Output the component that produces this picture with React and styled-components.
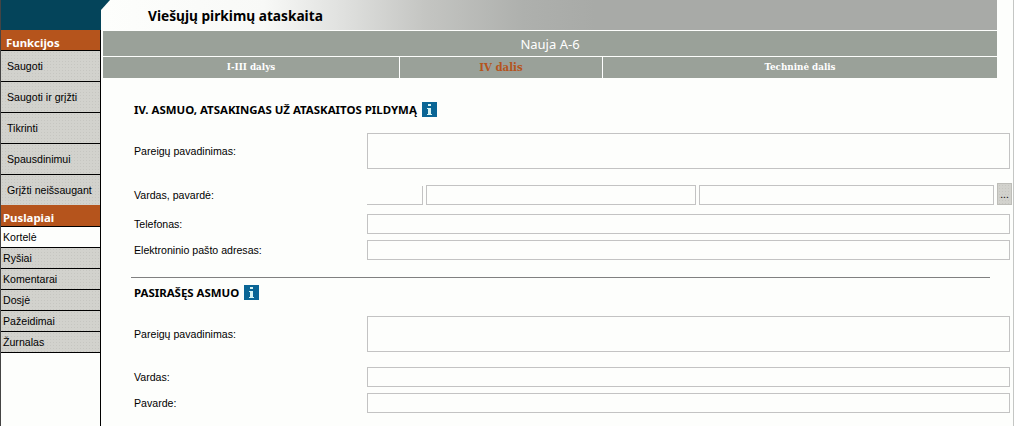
import React from 'react';
import styled, { createGlobalStyle } from 'styled-components';

const GlobalStyle = createGlobalStyle`
  html, body {
    margin: 0;
    padding: 0;
    height: 426px;
    overflow: hidden;
    background: #fdfefc;
  }
`;

const Page = styled.div`
  display: flex;
  width: 1014px;
  height: 426px;
  box-sizing: border-box;
  border-right: 1px solid #c4c6c4;
  font-family: 'Liberation Sans', Arial, sans-serif;
  font-size: 10.6px;
  color: #000;
  overflow: hidden;
`;

const Sidebar = styled.aside`
  flex: none;
  width: 101px;
  height: 426px;
  box-sizing: border-box;
  border-left: 1px solid #444;
  border-right: 1px solid #000;
  background: #fdfefc;
`;

const Corner = styled.div`
  position: relative;
  height: 30px;
  margin-right: -1px;
  background: #04445a;

  &::after {
    content: '';
    position: absolute;
    top: 0;
    left: 100%;
    border-top: 10px solid #04445a;
    border-right: 9px solid transparent;
  }
`;

const GroupTitle = styled.div`
  height: ${p => p.$height}px;
  padding: 5px 0 0 ${p => p.$indent}px;
  box-sizing: border-box;
  background: #b5541c;
  color: #fff;
  font-family: 'Noto Sans', sans-serif;
  font-weight: 700;
  font-size: 11.4px;
  line-height: 16px;
`;

const texture = `
  background-color: #d2d2cd;
  background-image: radial-gradient(#c6c6c1 0.7px, transparent 0.8px);
  background-size: 3px 3px;
`;

const ActionItem = styled.div`
  height: 31px;
  box-sizing: border-box;
  border-top: 1px solid #000;
  padding: 7px 0 0 6px;
  line-height: 16px;
  white-space: nowrap;
  ${texture}
`;

const PageItem = styled.div`
  height: 21px;
  box-sizing: border-box;
  border-top: 1px solid #000;
  padding-left: 2px;
  line-height: 20px;
  ${p => (p.$active ? 'background: #fdfefc;' : texture)}

  &:last-child {
    height: 22px;
    border-bottom: 1px solid #000;
  }
`;

const Main = styled.main`
  flex: 1;
  min-width: 0;
  padding-left: 2px;
`;

const Banner = styled.header`
  width: 894px;
  height: 30px;
  box-sizing: border-box;
  padding: 8px 0 0 45px;
  background: linear-gradient(90deg, #fdfefc 0%, #f8f9f7 18%, #dfe0de 27%, #c4c5c2 36%, #aeb0ad 47%, #a8aaa7 55%, #a8aaa7 100%);
  font-family: 'Noto Sans', sans-serif;
  font-weight: 700;
  font-size: 13.7px;
  line-height: 16px;
`;

const RecordTitle = styled.div`
  width: 894px;
  height: 25px;
  margin-top: 1px;
  background: #9aa199;
  color: #fff;
  text-align: center;
  font-family: 'Noto Sans', sans-serif;
  font-size: 13px;
  line-height: 26px;
`;

const Tabs = styled.nav`
  display: grid;
  grid-template-columns: 296px 203px 395px;
  width: 894px;
  height: 20px;
  margin-top: 1px;
`;

const Tab = styled.div`
  background: #9aa199;
  color: ${p => (p.$active ? '#b5541c' : '#fff')};
  font-family: 'DejaVu Serif', serif;
  font-weight: 700;
  font-size: ${p => (p.$active ? 10.2 : 8.8)}px;
  line-height: 21px;
  text-align: center;

  & + & {
    border-left: 1px solid #fff;
  }
`;

const Form = styled.div`
  padding: 25px 3px 0 28px;
`;

const SectionTitle = styled.h2`
  display: flex;
  align-items: center;
  gap: 5px;
  height: 15px;
  margin: 0 0 16px 3px;
  font-family: 'Noto Sans', sans-serif;
  font-size: 11.45px;
  font-weight: 700;
`;

const InfoIcon = styled.svg`
  flex: none;
  width: 15px;
  height: 15px;
`;

const Row = styled.div`
  display: grid;
  grid-template-columns: 233px 643px;
  align-items: end;
  margin: 0 0 ${p => p.$gap}px 3px;
`;

const Label = styled.div`
  height: ${p => (p.$tall ? 36 : 20)}px;
  line-height: ${p => (p.$tall ? 37 : 21)}px;
`;

const Field = styled.div`
  height: ${p => (p.$tall ? 36 : 20)}px;
  box-sizing: border-box;
  border: 1px solid #c3c3c3;
`;

const NameFields = styled.div`
  display: grid;
  grid-template-columns: 56px 270px 295px 15px;
  column-gap: 3px;
  align-items: end;
`;

const Prefix = styled.div`
  height: 19px;
  box-sizing: border-box;
  border-right: 1px solid #c3c3c3;
  border-bottom: 1px solid #c3c3c3;
`;

const LookupButton = styled.div`
  height: 22px;
  box-sizing: border-box;
  border: 1px solid #bdbdb8;
  text-align: center;
  font-size: 10px;
  line-height: 22px;
  ${texture}
`;

const Divider = styled.hr`
  width: 859px;
  height: 1px;
  margin: 17px 0 7px;
  border: 0;
  background: #808080;
`;

const Info = () => (
  <InfoIcon viewBox="0 0 15 15">
    <rect width="15" height="15" fill="#0a6595" />
    <path d="M6 2h3v2H6zM5 6h4v6h1v1H5v-1h1V7H5z" fill="#d8f4f4" />
  </InfoIcon>
);

export default function App() {
  return (
    <Page>
      <GlobalStyle />
      <Sidebar>
        <Corner />
        <GroupTitle $indent={5} $height={20}>Funkcijos</GroupTitle>
        {['Saugoti', 'Saugoti ir grįžti', 'Tikrinti', 'Spausdinimui', 'Grįžti neišsaugant'].map(a => (
          <ActionItem key={a}>{a}</ActionItem>
        ))}
        <GroupTitle $indent={2} $height={21}>Puslapiai</GroupTitle>
        {['Kortelė', 'Ryšiai', 'Komentarai', 'Dosjė', 'Pažeidimai', 'Žurnalas'].map((a, i) => (
          <PageItem key={a} $active={i === 0}>{a}</PageItem>
        ))}
      </Sidebar>
      <Main>
        <Banner>Viešųjų pirkimų ataskaita</Banner>
        <RecordTitle>Nauja A-6</RecordTitle>
        <Tabs>
          <Tab>I-III dalys</Tab>
          <Tab $active>IV dalis</Tab>
          <Tab>Techninė dalis</Tab>
        </Tabs>
        <Form>
          <SectionTitle>IV. ASMUO, ATSAKINGAS UŽ ATASKAITOS PILDYMĄ <Info /></SectionTitle>
          <Row $gap={14}>
            <Label $tall>Pareigų pavadinimas:</Label>
            <Field $tall />
          </Row>
          <Row $gap={9}>
            <Label>Vardas, pavardė:</Label>
            <NameFields>
              <Prefix />
              <Field />
              <Field />
              <LookupButton>...</LookupButton>
            </NameFields>
          </Row>
          <Row $gap={6}>
            <Label>Telefonas:</Label>
            <Field />
          </Row>
          <Row $gap={0}>
            <Label>Elektroninio pašto adresas:</Label>
            <Field />
          </Row>
          <Divider />
          <SectionTitle>PASIRAŠĘS ASMUO <Info /></SectionTitle>
          <Row $gap={15}>
            <Label $tall>Pareigų pavadinimas:</Label>
            <Field $tall />
          </Row>
          <Row $gap={6}>
            <Label>Vardas:</Label>
            <Field />
          </Row>
          <Row $gap={0}>
            <Label>Pavarde:</Label>
            <Field />
          </Row>
        </Form>
      </Main>
    </Page>
  );
}
